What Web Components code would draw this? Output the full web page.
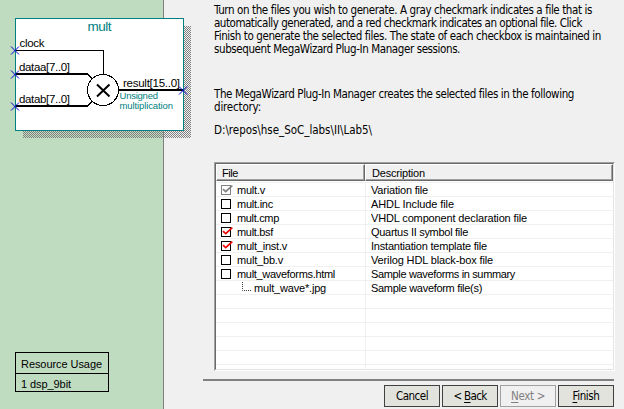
<!DOCTYPE html>
<html lang="en"><head><meta charset="utf-8"><title>MegaWizard Plug-In Manager</title>
<style>html,body{margin:0;height:100%;overflow:hidden;background:#f0f0f0}</style></head>
<body><wizard-page></wizard-page>
<script>
const define=(name,html,init)=>customElements.define(name,class extends HTMLElement{
  constructor(){super();this.attachShadow({mode:'open'});}
  connectedCallback(){
    const t=document.createElement('template');t.innerHTML=typeof html==='function'?html(this):html;
    this.shadowRoot.replaceChildren(t.content.cloneNode(true));
    if(init)init(this);
  }
});

// One line of text, tracked so that it takes the width in the "w" attribute.
define('text-line','<style>:host{display:block;white-space:pre;line-height:inherit}span{display:inline-block;white-space:pre}</style><span><slot></slot></span>',el=>{
  const s=el.shadowRoot.querySelector('span'),w=+el.getAttribute('w');
  if(w)s.style.letterSpacing=(w-s.getBoundingClientRect().width)/el.textContent.length+'px';
});

define('mult-symbol',`<style>:host{display:block;width:192px;height:139px}svg{display:block}text{font-family:"Liberation Sans",Arial,sans-serif;font-size:11.5px;fill:#000}.t{fill:#008080}.s{font-size:9.5px}</style>
<svg width="192" height="139" viewBox="0 0 192 139">
<defs><pattern id="d" width="2" height="2" patternUnits="userSpaceOnUse"><path d="M0 0h1v1h-1zM1 1h1v1h-1z" fill="#808080" shape-rendering="crispEdges"/></pattern></defs>
<rect x="23" y="26" width="168" height="112" fill="url(#d)"/>
<g shape-rendering="crispEdges"><rect x="15.5" y="18.5" width="168" height="112" fill="#fff" stroke="#008080"/>
<path d="M16 50.5H103.500V74" fill="none" stroke="#000"/>
<path d="M16 74H87.500L92.500 79M16 106H87.500L92.500 101M119 90H183" fill="none" stroke="#000" stroke-width="2"/>
<circle cx="103" cy="90" r="15.500" fill="#fff" stroke="#000"/></g>
<path d="M97 84.500L109.500 96.500M109.500 84.500L97 96.500" stroke="#000" stroke-width="2"/>
<path d="M11 46.500l8 8m0-8l-8 8M11 70.500l8 8m0-8l-8 8M11 102.500l8 8m0-8l-8 8M179 86.500l8 8m0-8l-8 8" stroke="#0000d0"/>
<text class="t" x="87.500" y="31" style="font-size:13.500px" textLength="24">mult</text>
<text x="19.500" y="47" textLength="25">clock</text><text x="19" y="71" textLength="51">dataa[7..0]</text><text x="19" y="103" textLength="51">datab[7..0]</text>
<text x="123" y="87" textLength="57">result[15..0]</text>
<text class="t s" x="119.500" y="99" textLength="38.500">Unsigned</text><text class="t s" x="119.500" y="109" textLength="53.500">multiplication</text></svg>`);

define('resource-usage',`<style>:host{display:block;box-sizing:border-box;width:94px;height:40px;border:1px solid #000;font:11px "Liberation Sans",Arial,sans-serif;color:#000}
div{padding-left:5px;height:20px;line-height:23px;border-bottom:1px solid #000}div+div{border:0;height:17px;line-height:21px}</style><div><text-line w="81">Resource Usage</text-line></div><div><text-line w="50">1 dsp_9bit</text-line></div>`);

define('side-panel',`<style>:host{display:flex;flex-direction:column;justify-content:space-between;box-sizing:border-box;width:164px;height:409px;background:#c0dcc0;border-right:1px solid #808080;flex:none}
mult-symbol{position:relative;z-index:1}resource-usage{margin:0 0 17px 15px}</style><mult-symbol></mult-symbol><resource-usage></resource-usage>`);

define('check-box',el=>{
  const k=el.getAttribute('kind'),g=k==='gray',c=g?'#808080':'#f00000';
  return `<style>:host{display:block;width:12px;height:11px;flex:none}svg{display:block;overflow:visible}</style><svg width="12" height="11"><rect x=".5" y=".5" width="9" height="9" fill="#fff" stroke="${g?'#808080':'#000'}"/>${k==='none'?'':`<path d="M2 4.200L4.700 6.700L11.300 .600" fill="none" stroke="${c}" stroke-width="1.700"/>`}</svg>`;
});

define('file-row',el=>{
  const k=el.getAttribute('kind');
  return `<style>:host{display:flex;box-sizing:border-box;height:14px;border-bottom:1px solid #f0f0f0;line-height:14px}
.a{display:flex;box-sizing:border-box;width:150px;flex:none;border-right:1px solid #f0f0f0;padding-left:5px}.b{padding-left:5px}
check-box{margin:2px 4px 0 0}.j{flex:none;margin:1px 2px 0 21px}</style>
<div class="a">${k==='child'?'<svg class="j" width="10" height="9"><path d="M.5 0V8.500H10" fill="none" stroke="#404040" stroke-dasharray="1 1"/></svg>':k?`<check-box kind="${k}"></check-box>`:''}<slot name="file"></slot></div><div class="b"><slot></slot></div>`;
});

const rows=[['gray','mult.v',28,'Variation file',57],['none','mult.inc',36,'AHDL Include file',83],['none','mult.cmp',42,'VHDL component declaration file',156],['red','mult.bsf',36,'Quartus II symbol file',97],['red','mult_inst.v',50,'Instantiation template file',116],['none','mult_bb.v',46,'Verilog HDL black-box file',122],['none','mult_waveforms.html',98,'Sample waveforms in summary',144],['child','mult_wave*.jpg',72,'Sample waveform file(s)',111]];
define('file-table',`<style>:host{display:block;box-sizing:border-box;width:401px;height:209px;border:1px solid;border-color:#a0a0a0 #fff #fff #a0a0a0;font:11px "Liberation Sans",Arial,sans-serif;color:#000;overflow:hidden}
.in{box-sizing:border-box;height:207px;border:1px solid;border-color:#696969 #e3e3e3 #e3e3e3 #696969;background:#fff;overflow:hidden}
.h{display:flex;height:17px}.h div{box-sizing:border-box;background:#f0f0f0;border:1px solid;border-color:#fff #696969 #696969 #fff;box-shadow:inset -1px -1px #a0a0a0;padding-left:5px;line-height:17px}
.h div:first-child{width:149px}.h div:last-child{flex:1;padding-left:6px}.gap{height:1px;border-bottom:1px solid #f0f0f0}</style>
<div class="in"><div class="h"><div><text-line w="16">File</text-line></div><div><text-line w="53">Description</text-line></div></div><div class="gap"></div>
${rows.map(r=>`<file-row kind="${r[0]}"><text-line slot="file" w="${r[2]}">${r[1]}</text-line><text-line w="${r[4]}">${r[3]}</text-line></file-row>`).join('')}${'<file-row></file-row>'.repeat(6)}</div>`);

define('wizard-button',`<style>:host{display:flex;justify-content:center;box-sizing:border-box;width:56px;height:22px;border:1px solid #404040;background:#e1e3dc;color:#000;line-height:21px}
:host([disabled]){border-color:#a0a0a0;background:#f0f0f0;color:#808080}::slotted(*){flex:none}</style><slot></slot>`);

define('wizard-page',`<style>:host{display:flex;width:624px;height:409px;background:#f0f0f0;font:11.5px "DejaVu Sans Condensed","DejaVu Sans",sans-serif;font-stretch:condensed;color:#000}
main{flex:1;min-width:0;display:flex;flex-direction:column}.copy{padding:4px 0 0 50px;line-height:13px;height:158px;box-sizing:border-box}
.p2{margin-top:32px}.p3{margin-top:10px}file-table{margin:4px 0 0 50px;flex:none}
hr{margin:8px 0 4px 39px;width:411px;height:2px;border:0;background:#808080;flex:none}
nav{display:flex;gap:2px;padding-left:220px}u{text-underline-offset:2px;text-decoration-thickness:1px}</style>
<side-panel></side-panel><main><section class="copy"><div>
<text-line w="378">Turn on the files you wish to generate. A gray checkmark indicates a file that is</text-line>
<text-line w="368">automatically generated, and a red checkmark indicates an optional file. Click</text-line>
<text-line w="387">Finish to generate the selected files. The state of each checkbox is maintained in</text-line>
<text-line w="246">subsequent MegaWizard Plug-In Manager sessions.</text-line></div>
<div class="p2"><text-line w="360">The MegaWizard Plug-In Manager creates the selected files in the following</text-line>
<text-line w="47">directory:</text-line></div>
<div class="p3"><text-line w="158">D:\\repos\\hse_SoC_labs\\II\\Lab5\\</text-line></div></section>
<file-table></file-table><hr><nav>
<wizard-button><text-line w="32">Cancel</text-line></wizard-button><wizard-button><text-line w="33">&lt; <u>B</u>ack</text-line></wizard-button><wizard-button disabled><text-line w="34"><u>N</u>ext &gt;</text-line></wizard-button><wizard-button><text-line w="27"><u>F</u>inish</text-line></wizard-button></nav></main>`);
</script></body></html>
